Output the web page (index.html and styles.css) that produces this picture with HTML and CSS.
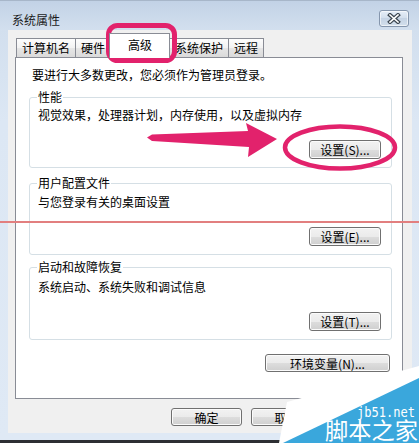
FILE: index.html
```html
<!DOCTYPE html>
<html lang="zh-CN">
<head>
<meta charset="utf-8">
<title>系统属性</title>
<link rel="stylesheet" href="styles.css">
</head>
<body>
<div class="stage">
  <div class="window">
    <div class="titlebar">
      <span class="title">系统属性</span>
      <button class="close" aria-label="关闭">
        <svg width="16" height="11" viewBox="0 0 16 11">
          <path d="M4 2 L12 9 M12 2 L4 9" stroke="#3c4650" stroke-width="4" stroke-linecap="square" fill="none"/>
          <path d="M4 2 L12 9 M12 2 L4 9" stroke="#ffffff" stroke-width="1.6" stroke-linecap="square" fill="none"/>
        </svg>
      </button>
    </div>
    <div class="client">
      <div class="tabs">
        <div class="tab">计算机名</div>
        <div class="tab">硬件</div>
        <div class="tab active">高级</div>
        <div class="tab">系统保护</div>
        <div class="tab">远程</div>
      </div>
      <div class="panel">
        <p class="intro">要进行大多数更改，您必须作为管理员登录。</p>
        <fieldset class="group g1">
          <legend>性能</legend>
          <p class="desc">视觉效果，处理器计划，内存使用，以及虚拟内存</p>
          <div class="btnrow"><button class="btn set">设置(S)...</button></div>
        </fieldset>
        <fieldset class="group g2">
          <legend>用户配置文件</legend>
          <p class="desc">与您登录有关的桌面设置</p>
          <div class="btnrow"><button class="btn set">设置(E)...</button></div>
        </fieldset>
        <fieldset class="group g3">
          <legend>启动和故障恢复</legend>
          <p class="desc">系统启动、系统失败和调试信息</p>
          <div class="btnrow"><button class="btn set">设置(T)...</button></div>
        </fieldset>
        <div class="envrow"><button class="btn env">环境变量(N)...</button></div>
      </div>
      <div class="footer">
        <button class="btn foot">确定</button>
        <button class="btn foot">取消</button>
        <button class="btn foot">应用(A)</button>
      </div>
    </div>
  </div>
  <svg class="overlay" width="419" height="443" viewBox="0 0 419 443">
    <rect x="0" y="221" width="419" height="2" fill="#e27f7f"/>
    <rect x="108.5" y="25.5" width="66" height="35" rx="9" ry="9" fill="none" stroke="#e2226c" stroke-width="5"/>
    <polygon points="147,137.5 152,134.5 248,131 246,123 277,139 248,157 249,147 152,141" fill="#e2226c"/>
    <ellipse cx="340" cy="147.5" rx="55" ry="21" fill="none" stroke="#e2226c" stroke-width="4.5"/>
    <polygon points="287,402 419,366 419,443 279,443" fill="#ffffff"/>
    <polygon points="283,443 419,378 419,443" fill="#3aa7dc"/>
    <text x="357" y="417" class="wm-small" textLength="58" lengthAdjust="spacingAndGlyphs">jb51.net</text>
    <text x="325" y="439" class="wm-big" textLength="93" lengthAdjust="spacingAndGlyphs">脚本之家</text>
  </svg>
</div>
</body>
</html>
```
FILE: styles.css
```css
* { box-sizing: border-box; }
html, body { margin: 0; padding: 0; }
body {
  font-family: "Noto Sans CJK SC", "Noto Sans", sans-serif;
  font-size: 12px;
  color: #000;
}
.stage {
  position: relative;
  width: 419px;
  height: 443px;
  overflow: hidden;
  background: #2d2f33;
}
.window {
  width: 420px;
  height: 440px;
  padding: 0 8px 7px 8px;
  display: flex;
  flex-direction: column;
  background: linear-gradient(to bottom, #c2d2e6 0px, #d2dfee 28px, #dce7f4 120px, #dfe9f5 100%);
  border-top: 1px solid #a7b6c9;
}
.titlebar {
  height: 29px;
  display: flex;
  justify-content: space-between;
  align-items: flex-start;
}
.title {
  margin: 11px 0 0 4px;
  line-height: 16px;
  color: #1b1b1b;
}
.close {
  margin: 9px 3px 0 0;
  width: 30px;
  height: 17px;
  padding: 0;
  border: 1px solid #8596ad;
  border-radius: 3px;
  background: linear-gradient(to bottom, #e6eef8, #d2deec 50%, #c5d3e4 50%, #d3dfec);
  box-shadow: inset 0 0 0 1px rgba(255,255,255,0.6);
  display: flex;
  align-items: center;
  justify-content: center;
}
.client {
  flex: 1;
  background: #f0f0f0;
  padding: 3px 9px 0 7px;
  display: flex;
  flex-direction: column;
}
.tabs {
  display: flex;
  align-items: flex-end;
  height: 24px;
  padding-left: 1px;
}
.tab {
  height: 19px;
  border: 1px solid #898c95;
  border-bottom: none;
  padding: 0 5px;
  margin-right: -1px;
  line-height: 18px;
  white-space: nowrap;
  background: linear-gradient(to bottom, #fdfdfd, #f2f2f2 50%, #e6e6e6 51%, #dadada);
}
.tab.active {
  height: 25px;
  margin: 0 -1px -1px -1px;
  padding: 2px 17px 0 18px;
  background: #ffffff;
  position: relative;
  z-index: 1;
}
.panel {
  height: 342px;
  border: 1px solid #898c95;
  background: #ffffff;
  padding: 9px 10px 0 13px;
}
.intro {
  margin: 0 0 0 3px;
  line-height: 16px;
}
.group {
  margin: 7px 0 0 0;
  border: 1px solid #d5dfe5;
  border-radius: 3px;
  padding: 0 10px 8px 7px;
  min-width: 0;
}
.group.g2 { margin-top: 8px; }
.group.g3 { margin-top: 5px; }
.group legend {
  padding: 0 1px;
  line-height: 14px;
}
.desc {
  margin: 3px 0 0 1px;
  line-height: 16px;
}
.g2 .desc { margin-top: 4px; }
.g3 .desc { margin-top: 5px; }
.btnrow {
  margin-top: 17px;
  display: flex;
  justify-content: flex-end;
}
.btn {
  font-family: inherit;
  font-size: 12px;
  color: #000;
  padding: 0;
  border: 1px solid #707070;
  border-radius: 3px;
  background: linear-gradient(to bottom, #f2f2f2, #ebebeb 50%, #dddddd 51%, #cfcfcf);
  box-shadow: inset 0 0 0 1px #fbfbfb;
  line-height: 15px;
  white-space: nowrap;
}
.btn.set { width: 72px; height: 19px; }
.envrow {
  margin-top: 14px;
  display: flex;
  justify-content: flex-end;
  padding-right: 2px;
}
.btn.env { width: 125px; height: 18px; }
.footer {
  margin-top: 9px;
  display: flex;
  justify-content: flex-end;
  gap: 9px;
  padding-right: 1px;
}
.btn.foot { width: 71px; height: 18px; }
.overlay {
  position: absolute;
  left: 0;
  top: 0;
  pointer-events: none;
}
.wm-small {
  font-family: "DejaVu Sans Mono", monospace;
  font-size: 14px;
  fill: #ffffff;
}
.wm-big {
  font-family: "Noto Sans CJK SC", sans-serif;
  font-size: 23px;
  fill: #ffffff;
}
```
